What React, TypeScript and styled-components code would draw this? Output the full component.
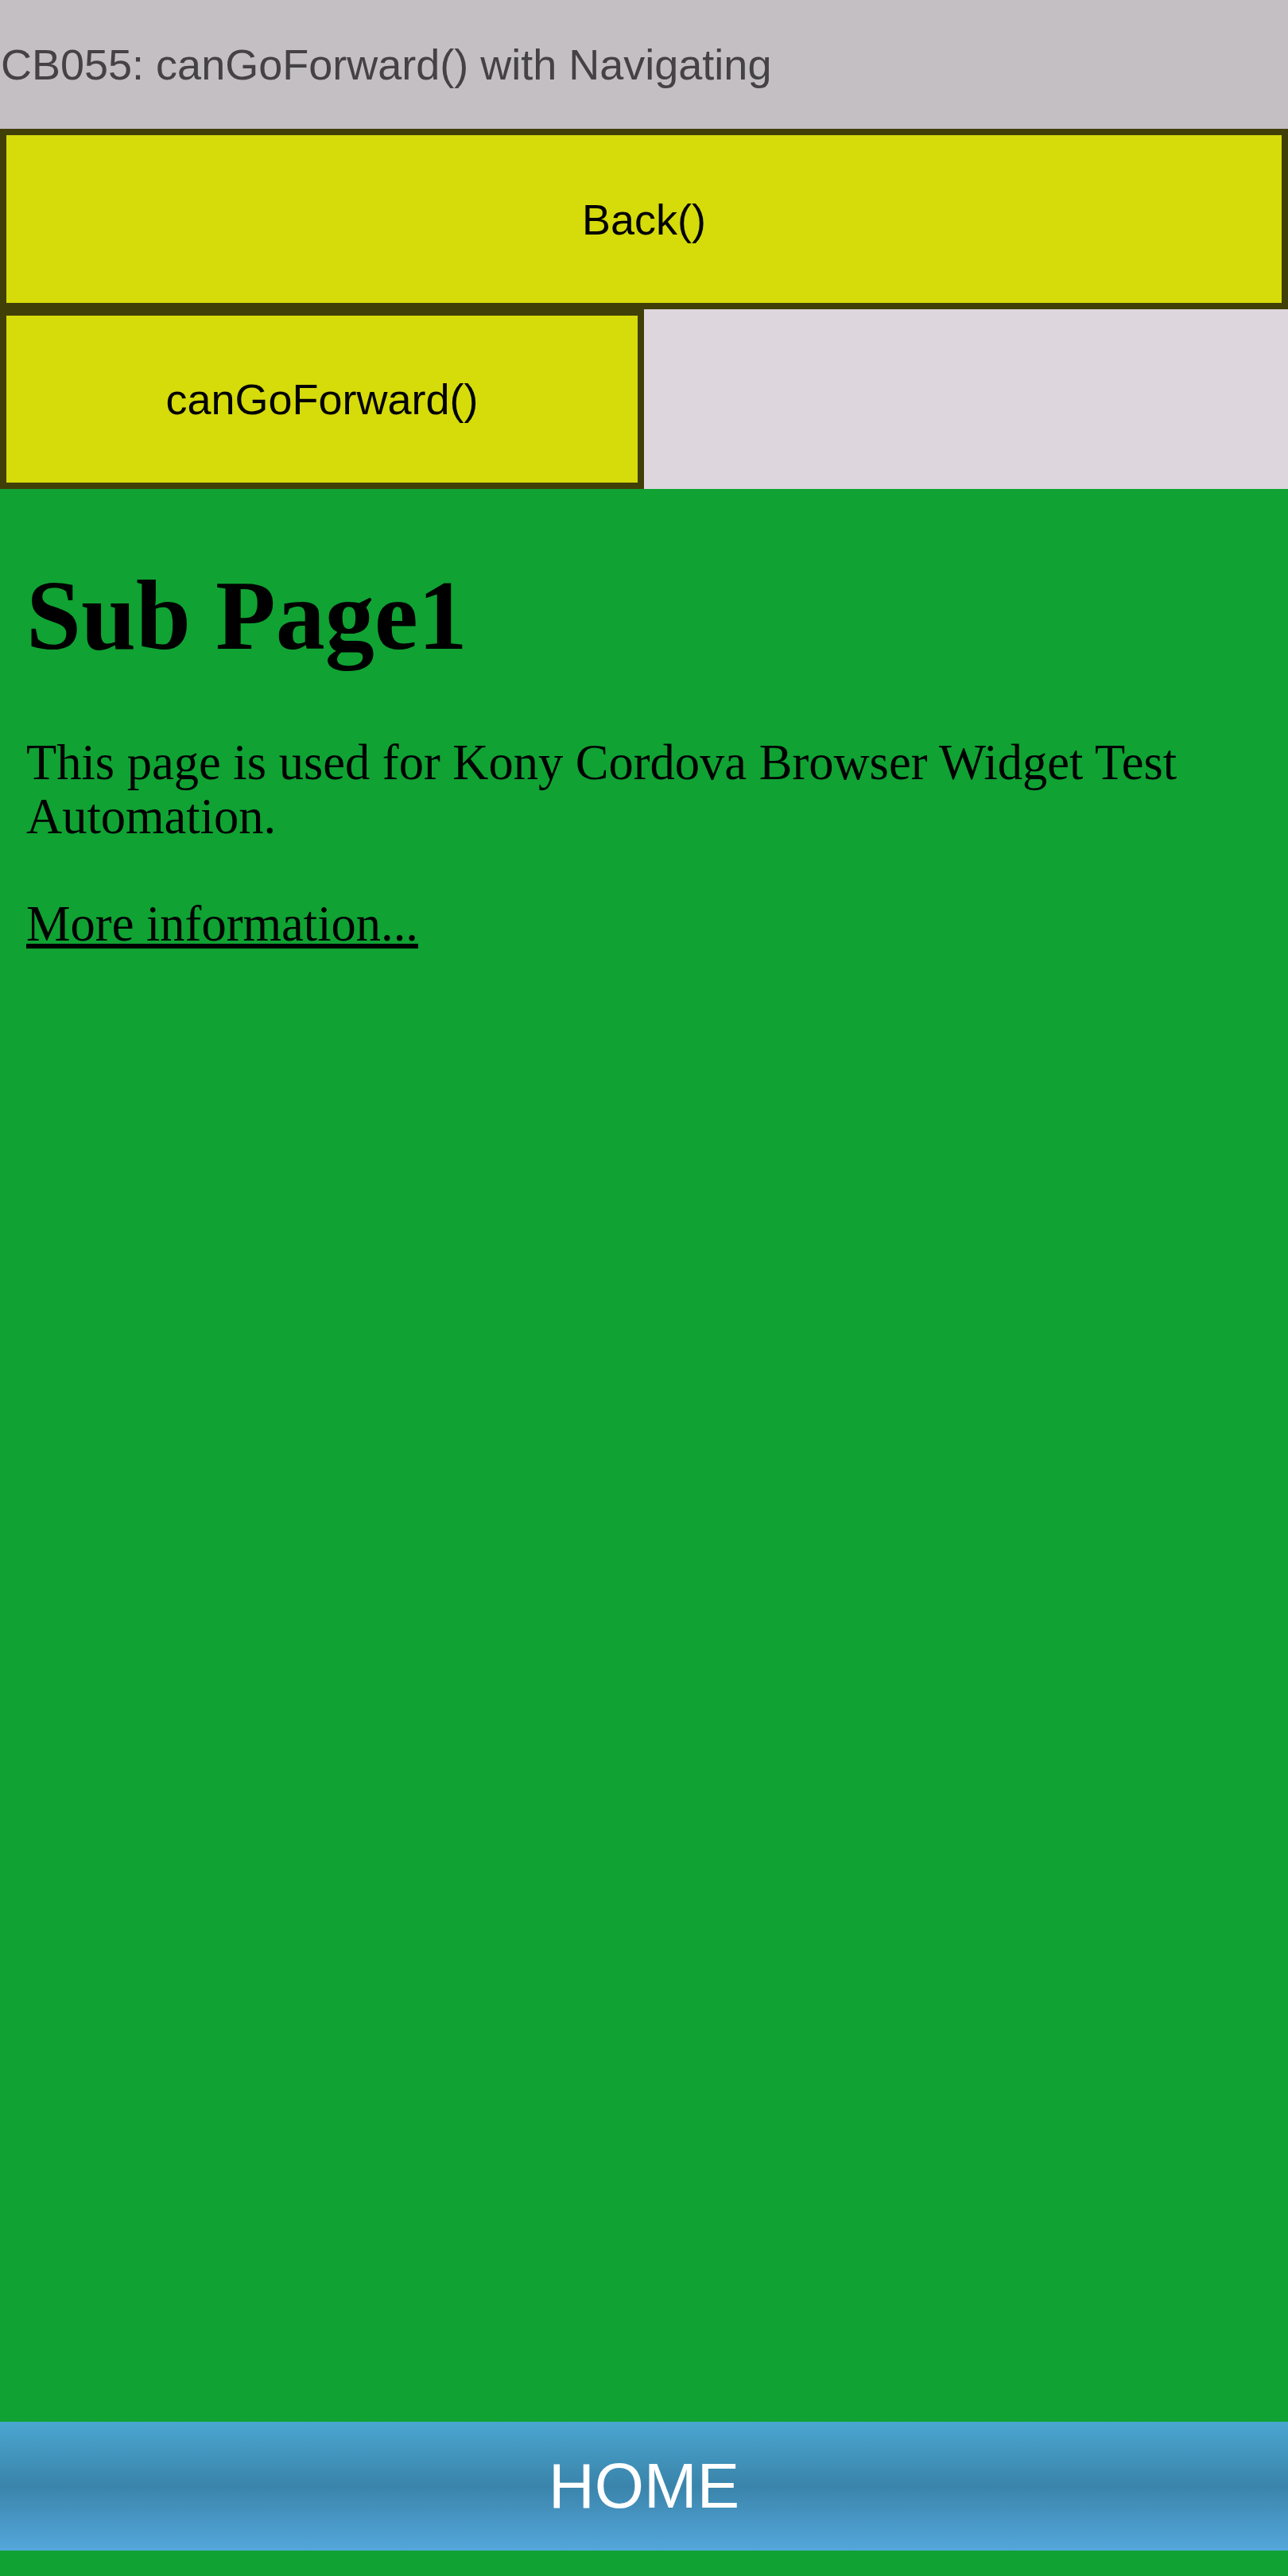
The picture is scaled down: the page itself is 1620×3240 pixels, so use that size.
import React from "react";
import styled, { createGlobalStyle } from "styled-components";

const Global = createGlobalStyle`
  html, body { margin: 0; padding: 0; }
  body { background: #10a233; }
`;

const Page = styled.div`
  min-height: 3240px;
  display: flex;
  flex-direction: column;
  background: #10a233;
`;

const Header = styled.div`
  height: 162px;
  background: #c4bfc3;
  display: flex;
  align-items: center;
  padding-left: 1px;
  font-family: "Liberation Sans", Arial, sans-serif;
  font-size: 54px;
  color: #454245;
  white-space: nowrap;
`;

const ButtonRow = styled.div`
  display: flex;
  background: #ddd6dc;
`;

const ActionButton = styled.button<{ $half?: boolean; $height: number }>`
  box-sizing: border-box;
  width: ${(p) => (p.$half ? "810px" : "100%")};
  height: ${(p) => p.$height}px;
  margin: 0;
  padding: 0;
  border: 8px solid #413f08;
  background: #d6db0a;
  font-family: "Liberation Sans", Arial, sans-serif;
  font-size: 54px;
  color: #000;
  display: flex;
  align-items: center;
  justify-content: center;
`;

const Content = styled.div`
  flex: 1;
  padding: 6px 33px 0;
  font-family: "Liberation Serif", "Times New Roman", serif;
  color: #000;
`;

const Title = styled.h1`
  font-size: 124px;
  font-weight: bold;
  margin: 83px 0 79px;
`;

const Para = styled.p`
  font-size: 62.5px;
  line-height: 68px;
  margin: 67px 0;
`;

const Link = styled.a`
  color: #000;
  text-decoration: underline;
`;

const HomeBar = styled.div`
  height: 162px;
  margin-bottom: 32px;
  background: linear-gradient(to bottom, #4aa6d0 0%, #3a84ab 50%, #54a7db 100%);
  display: flex;
  align-items: center;
  justify-content: center;
  font-family: "Liberation Sans", Arial, sans-serif;
  font-size: 80px;
  color: #fff;
`;

export default function App() {
  return (
    <>
      <Global />
      <Page>
        <Header>CB055: canGoForward() with Navigating</Header>
        <ButtonRow>
          <ActionButton $height={227}>Back()</ActionButton>
        </ButtonRow>
        <ButtonRow>
          <ActionButton $half $height={226}>canGoForward()</ActionButton>
        </ButtonRow>
        <Content>
          <Title>Sub Page1</Title>
          <Para>This page is used for Kony Cordova Browser Widget Test Automation.</Para>
          <Para>
            <Link href="#">More information...</Link>
          </Para>
        </Content>
        <HomeBar>HOME</HomeBar>
      </Page>
    </>
  );
}
